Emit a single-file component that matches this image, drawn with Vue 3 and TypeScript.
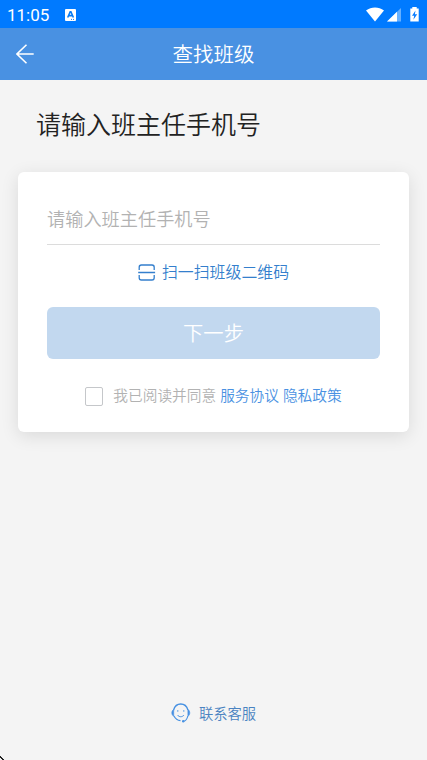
<script setup lang="ts">
import { ref } from 'vue'

const phone = ref<string>('')
const agreed = ref<boolean>(false)
</script>

<template>
  <div class="screen">
    <div class="status">
      <span class="time">11:05</span>
      <svg class="badge" width="11" height="12" viewBox="0 0 11 12">
        <rect width="11" height="12" rx="1" fill="#fff" />
        <path d="M2.7 8.5 5.2 2.8h.7l2.5 5.7M3.7 6.6h3.7" fill="none" stroke="#087cf4" stroke-width="1.6" />
        <path d="M6 10.4h1M8 10.4h1" stroke="#087cf4" stroke-width="1" />
      </svg>
      <svg class="signals" width="54" height="16" viewBox="0 0 54 16">
        <path d="M0 3.4C5.3-.5 12.7-.5 18 3.4L9 14.5Z" fill="#fff" />
        <path d="M21 14.4 35 1v13.4Z" fill="#66b0ff" />
        <path d="M21 14.4 31 4.8v9.6Z" fill="#fff" />
        <path d="M44.3 1.5h2V0h4.4v1.5h2V14.4h-8.4Z" fill="#fff" />
        <path d="M49.5 3.5 46 8.7h2.2L47.4 12.8 51.2 7.2H48.9Z" fill="#087cff" />
      </svg>
    </div>

    <header class="nav">
      <button class="back" aria-label="返回">
        <svg width="18" height="20" viewBox="0 0 18 20">
          <path d="M10.5.7.9 10l9.6 9.3M1 10h16.7" fill="none" stroke="#fff" stroke-width="1.6" />
        </svg>
      </button>
      <h1>查找班级</h1>
    </header>

    <main>
      <h2>请输入班主任手机号</h2>
      <section class="card">
        <input v-model="phone" class="phone" type="tel" placeholder="请输入班主任手机号" />
        <a class="scan">
          <svg width="18" height="17" viewBox="0 0 18 17">
            <path d="M1.2 6V3.2Q1.2 1 3.4 1H14Q16.2 1 16.2 3.2V6M1.2 11v2.8Q1.2 16 3.4 16H14q2.2 0 2.2-2.2V11M.2 8.5h16.9" fill="none" stroke="#347fcd" stroke-width="1.3" />
          </svg>
          <span>扫一扫班级二维码</span>
        </a>
        <button class="next">下一步</button>
        <div class="agreement">
          <input v-model="agreed" type="checkbox" class="check" />
          <span>我已阅读并同意</span>
          <a>服务协议</a>
          <a>隐私政策</a>
        </div>
      </section>
    </main>

    <footer class="service">
      <svg width="20" height="20" viewBox="0 0 20 20" fill="none" stroke="#4791e2">
        <path d="M2.6 7C3.8 2.9 6.1 1 9.7 1s6.1 2 7.2 6" stroke-width="1.3" />
        <path d="M2.7 6.6C.2 7.5.2 12.3 2.7 13.2ZM16.9 6.6c2.5.9 2.5 5.7 0 6.6Z" fill="#4791e2" stroke-width=".6" />
        <path d="M3 13c1.4 3 3.3 4.4 6.5 4.6M16.8 13c-.6 3-1.8 4.6-4 5.3" stroke-width="1.1" />
        <path d="M6.8 7.2v1.5M12.8 7.2v1.5M6.5 12c1.6 2.3 4.8 2.3 6.5 0" stroke-width="1" />
        <circle cx="12.2" cy="18.2" r="1.2" fill="#4791e2" stroke="none" />
      </svg>
      <span>联系客服</span>
    </footer>
    <svg class="corner" width="4" height="4" viewBox="0 0 4 4">
      <path d="M0 0h1v1h1v1h1v1h1v1H2V3H1V2H0Z" fill="#222" />
    </svg>
  </div>
</template>

<style>
body {
  background: #f4f4f4;
}
</style>

<style scoped>
.screen {
  position: relative;
  box-sizing: border-box;
  display: flex;
  flex-direction: column;
  height: 760px;
  overflow: hidden;
  background: #f4f4f4;
  font-family: "Noto Sans CJK SC", sans-serif;
  font-weight: 350;
}
.status {
  display: flex;
  flex: none;
  align-items: center;
  box-sizing: border-box;
  height: 28px;
  padding: 1px 7px 0;
  background: #007aff;
}
.time {
  width: 58px;
  color: #fff;
  font: 400 17px/28px Roboto, sans-serif;
}
.signals {
  margin-left: auto;
}
.nav {
  display: grid;
  flex: none;
  grid-template-columns: 50px 1fr 50px;
  align-items: center;
  height: 52px;
  background: #4991e2;
}
button {
  padding: 0;
  border: 0;
  font-family: inherit;
}
.back {
  display: flex;
  padding-left: 16px;
  background: none;
}
h1 {
  margin: 0;
  color: #fff;
  font-size: 20.5px;
  font-weight: inherit;
  line-height: 50px;
  height: 52px;
  text-align: center;
}
main {
  padding: 24px 18px 0;
}
h2 {
  height: 40px;
  margin: 0 0 28px;
  padding-left: 18px;
  color: #222;
  font-size: 25px;
  font-weight: inherit;
  line-height: 39px;
}
.card {
  display: flex;
  flex-direction: column;
  box-sizing: border-box;
  height: 260px;
  padding: 22px 29px 0;
  border-radius: 6px;
  background: #fff;
  box-shadow: 0 4px 18px rgba(0, 0, 0, 0.11);
}
.phone {
  box-sizing: border-box;
  flex: none;
  width: 100%;
  height: 51px;
  padding: 0 0 3px;
  border: 0;
  border-bottom: 1px solid #dcdcdc;
  border-radius: 0;
  outline: 0;
  color: #222;
  font-family: inherit;
  font-size: 18.2px;
  font-weight: inherit;
}
.phone::placeholder {
  color: #b2b2b2;
  opacity: 1;
}
.scan {
  display: flex;
  align-items: center;
  justify-content: center;
  gap: 6px;
  height: 24px;
  margin-top: 15px;
  color: #347fcd;
  font-size: 15.9px;
  line-height: 24px;
}
.next {
  flex: none;
  height: 52px;
  margin-top: 23px;
  padding-bottom: 2px;
  border-radius: 6px;
  background: #c2d8ef;
  color: #fff;
  font-size: 20.3px;
  font-weight: inherit;
  line-height: 50px;
}
.agreement {
  display: flex;
  align-items: center;
  justify-content: center;
  height: 24px;
  margin-top: 24px;
  color: #b2b2b2;
  font-size: 14.7px;
  line-height: 24px;
  white-space: nowrap;
}
.agreement a {
  margin-left: 4px;
  color: #4991e2;
}
.check {
  appearance: none;
  box-sizing: border-box;
  width: 18px;
  height: 19px;
  margin: 3px 10px 0 0;
  border: 1px solid #c5c7ca;
  border-radius: 2px;
}
.check:checked {
  background: #4991e2;
}
.service {
  display: flex;
  align-items: center;
  justify-content: center;
  gap: 8px;
  height: 24px;
  margin: auto 0 35px;
  color: #4a83c1;
  font-size: 14.3px;
  line-height: 24px;
}
.corner {
  position: absolute;
  bottom: 0;
  left: 0;
}
</style>
